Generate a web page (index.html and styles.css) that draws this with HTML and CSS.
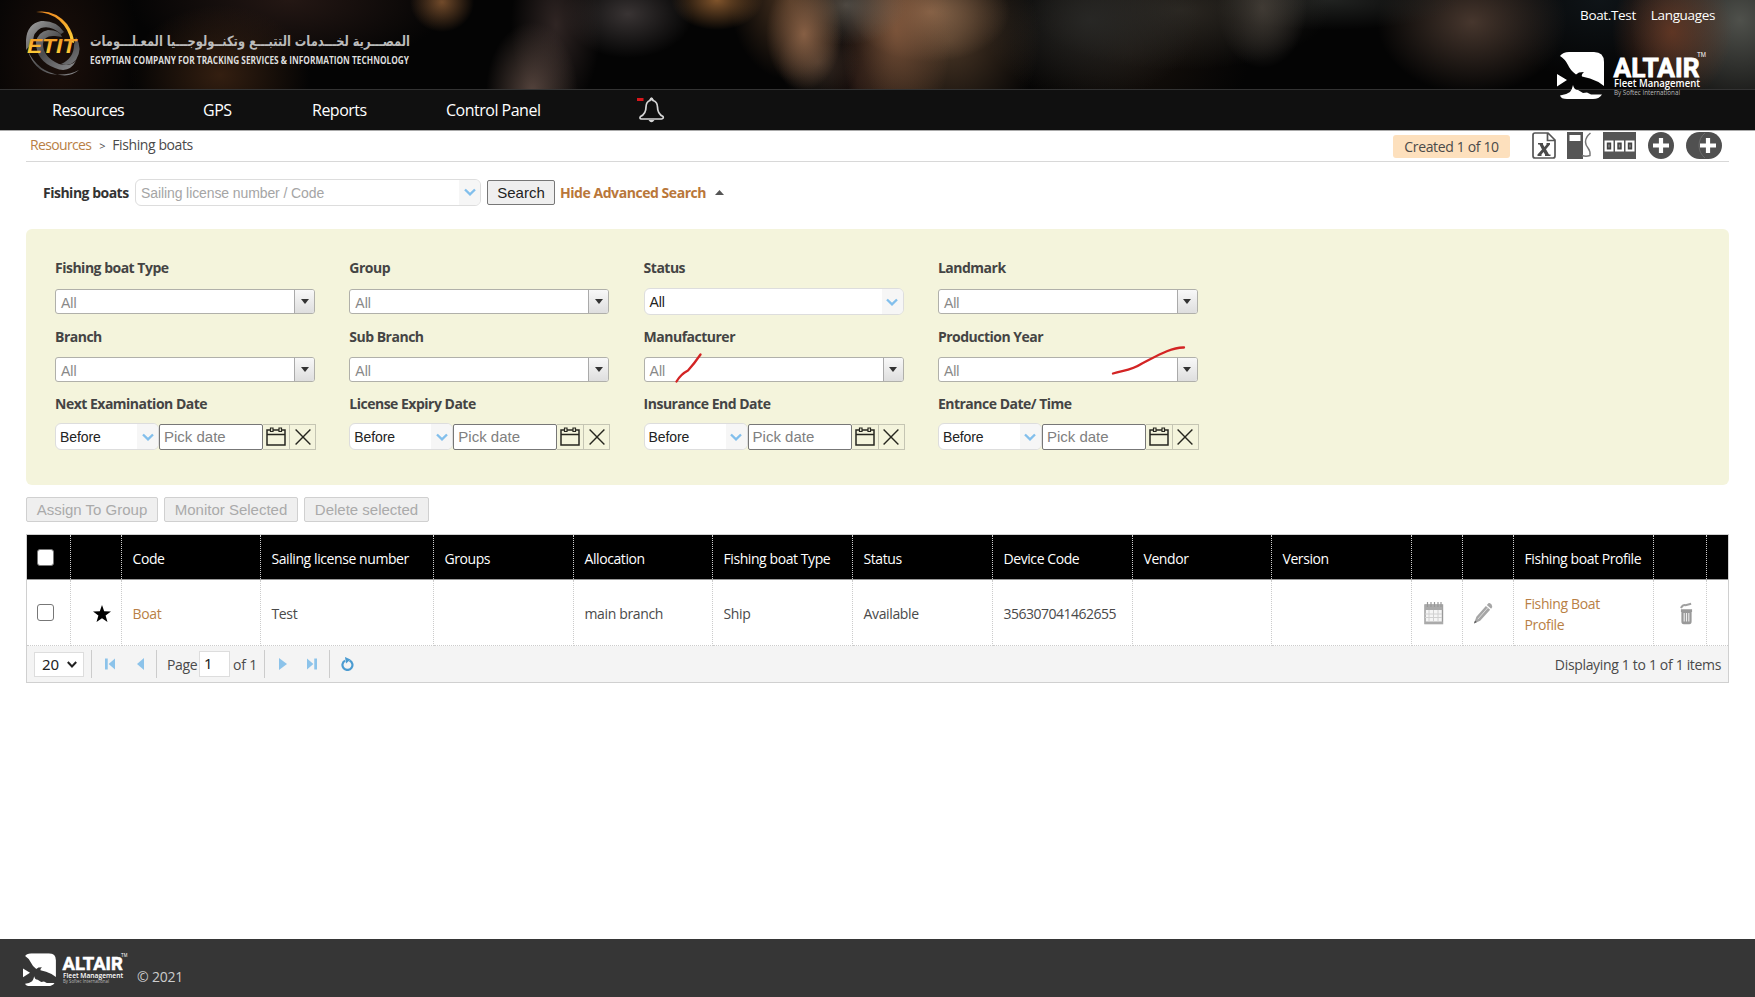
FILE: index.html
```html
<!DOCTYPE html>
<html lang="en">
<head>
<meta charset="utf-8">
<title>Fishing boats</title>
<link rel="stylesheet" href="styles.css">
</head>
<body>
<svg class="defs" width="0" height="0" aria-hidden="true">
  <symbol id="eagle" viewBox="0 0 48 48">
    <path fill="#fff" d="M3 4Q6 0 12 0H37Q47 0 47 10V34Q41 29 33 26.500L25 24.500Q24 22.500 27 20L22 20.500 19 22.500Q13 18 11 13 8 7 3 4ZM0 22L10 28 0 34.500ZM16 33Q17 38 21 38L26 41 30 40.500 34 42.500 45 42.500Q42 47 36 47H10Q4 47 3 43.500 9 43 13 40 15 38 16 33Z"/>
  </symbol>
  <symbol id="chev" viewBox="0 0 12 8"><path d="M1 1.500L6 6.300 11 1.500" fill="none" stroke="#82bfec" stroke-width="2.400"/></symbol>
  <symbol id="cal" viewBox="0 0 20 19"><path d="M1 3H19V18H1ZM1 7.500H19" fill="none" stroke="#26261f" stroke-width="1.500"/><path d="M4.500 1H7V4.500H4.500ZM13 1H15.500V4.500H13Z" fill="#f4f4dc" stroke="#26261f" stroke-width="1.200"/></symbol>
  <symbol id="cross" viewBox="0 0 16 16"><path d="M.6.600L15.400 15.400M15.400.600L.6 15.400" stroke="#26261f" stroke-width="1.400"/></symbol>
</svg>

<header class="banner">
  <svg class="etit" width="390" height="72" viewBox="0 0 390 72">
    <defs>
      <linearGradient id="gold" x1="0" y1="0" x2="0" y2="1"><stop offset="0" stop-color="#ee8d22"/><stop offset="1" stop-color="#ffd73c"/></linearGradient>
      <linearGradient id="steel" x1="0" y1="0" x2="1" y2="1"><stop offset="0" stop-color="#a5a5a5"/><stop offset=".5" stop-color="#4c4c4e"/><stop offset="1" stop-color="#8e8e90"/></linearGradient>
    </defs>
    <path fill="url(#gold)" d="M10 2Q28-1 41 14 48 24 48 33L45 32Q43 19 33 10 23 2 10 2Z"/>
    <path fill="url(#steel)" d="M0 30Q1 14 15 11 30 10 38 22L35 24Q25 15 15 18 7 22 7 32L0 40ZM10 32Q12 22 22 20 34 20 36 27L29 26Q18 25 17 34 17 47 33 54 44 57 50 51 43 64 29 58 10 51 10 32Z"/>
    <path fill="url(#steel)" d="M2 41Q8 60 25 64 42 66 53 60 45 67 34 65 12 62 2 41ZM50 27Q57 39 50 50 44 57 35 54 48 48 48 35Z"/>
    <text class="etit-name" x="1" y="43" textLength="49" lengthAdjust="spacingAndGlyphs">ETIT</text>
    <text class="etit-ar" x="224" y="36" direction="rtl" text-anchor="middle" textLength="320" lengthAdjust="spacingAndGlyphs">المصـــرية لخـــدمات التتبـــع وتكنــولوجـــيا المعـلـــومات</text>
    <text class="etit-en" x="64" y="53.500" textLength="319" lengthAdjust="spacingAndGlyphs">EGYPTIAN COMPANY FOR TRACKING SERVICES &amp; INFORMATION TECHNOLOGY</text>
  </svg>
  <div class="user-links"><a>Boat.Test</a><a>Languages</a></div>
  <svg class="altair-top" width="150" height="48" viewBox="0 0 150 48">
    <use href="#eagle" width="48" height="48"/>
    <text class="altair-name" x="56.500" y="24.500" textLength="86" lengthAdjust="spacingAndGlyphs">ALTAIR</text>
    <text class="altair-sub" x="57" y="35" textLength="86" lengthAdjust="spacingAndGlyphs">Fleet Management</text>
    <text class="altair-by" x="57" y="43" textLength="66" lengthAdjust="spacingAndGlyphs">By Softec International</text>
    <text class="altair-tm" x="140" y="5" textLength="9" lengthAdjust="spacingAndGlyphs">TM</text>
  </svg>
</header>

<nav class="menu">
  <a class="m1">Resources</a><a class="m2">GPS</a><a class="m3">Reports</a><a class="m4">Control Panel</a>
  <svg class="bell" width="30" height="28" viewBox="0 0 30 28"><path fill="#d8161b" d="M0 2H6.500V5H0Z"/><path d="M13 4.500Q14.500 1 16 4.500Q20.500 6 20.500 11Q20.500 18 26 20.500Q27 22.500 24.500 23H4.500Q2 22.500 3.500 20.500Q9 18 9 11Q9 6 13 4.500Z" fill="none" stroke="#d6d6d6" stroke-width="1.700"/><path d="M11.500 24Q14.500 28.500 17.500 24ZM12 4.500Q14.500-2 17 4.500Z" fill="#d6d6d6"/></svg>
</nav>

<main class="page">
  <div class="crumbs">
    <a class="link">Resources</a><span class="gt">&gt;</span><span class="here">Fishing boats</span>
    <div class="tools">
      <span class="badge">Created 1 of 10</span>
      <svg class="t-x" width="24" height="27" viewBox="0 0 24 27"><path d="M3 1H16L23 8V24Q23 26 21 26H3Q1 26 1 24V3Q1 1 3 1ZM15.500 1V8.500H23" fill="#fff" stroke="#555" stroke-width="1.700"/><path d="M6 11H11V12.500L12.500 15 14.500 12.500V11H18V12.500L14 17.300 17 22.500H18.500V24H13V22.500L11.500 20 9.500 22.500V24H5.500V22.500L10 17.500 7.500 12.500H6Z" fill="#4a4a4a"/></svg>
      <svg class="t-f" width="25" height="27" viewBox="0 0 25 27"><path fill="#555" fill-rule="evenodd" d="M0 0H16V27H0ZM2.500 3V9H13.500V3Z"/><path d="M23.500 1Q18.500 5 18.500 10 18.500 13 21 16 23.500 19 23 23.500 19 25 15 23.500" fill="none" stroke="#777" stroke-width="1.500"/></svg>
      <svg class="t-c" width="33" height="27" viewBox="0 0 33 27"><path fill="#555" d="M0 0H33V27H0Z"/><path fill="#fff" d="M1.500 8.500H10.500V19.500H1.500ZM12 8.500H21V19.500H12ZM22.500 8.500H31.500V19.500H22.500Z"/><path d="M6 10.500V17.500M16.500 10.500V17.500M27 10.500V17.500" stroke="#444" stroke-width="4.400"/><path d="M6 12.500V15.500M16.500 12.500V15.500M27 12.500V15.500" stroke="#888" stroke-width="1.400"/></svg>
      <svg class="t-p" width="26" height="27" viewBox="0 0 26 27"><ellipse cx="13" cy="13.500" rx="13" ry="13.500" fill="#505050"/><path d="M13 6V21M5 13.500H21" stroke="#fff" stroke-width="4.200"/></svg>
      <svg class="t-pp" width="36" height="27" viewBox="0 0 36 27"><rect width="36" height="27" rx="13.500" fill="#505050"/><path d="M19 1Q13 6 13 13.500 13 21 19 26" fill="none" stroke="#6b6b6b"/><path d="M22 6V21M14 13.500H30" stroke="#fff" stroke-width="4.200"/></svg>
    </div>
  </div>

  <div class="search">
    <b>Fishing boats</b>
    <div class="sel sel-main"><span class="ph">Sailing license number / Code</span><i><svg width="12" height="8"><use href="#chev"/></svg></i></div>
    <button class="btn btn-search">Search</button>
    <a class="adv">Hide Advanced Search</a>
    <svg class="up" width="9" height="5" viewBox="0 0 9 5"><path d="M0 5L4.500 0 9 5Z" fill="#555"/></svg>
  </div>

  <section class="filters">
    <div class="cell"><b>Fishing boat Type</b><div class="combo"><span>All</span><i></i></div></div>
    <div class="cell"><b>Group</b><div class="combo"><span>All</span><i></i></div></div>
    <div class="cell"><b>Status</b><div class="sel"><span>All</span><i><svg width="12" height="8"><use href="#chev"/></svg></i></div></div>
    <div class="cell"><b>Landmark</b><div class="combo"><span>All</span><i></i></div></div>

    <div class="cell"><b>Branch</b><div class="combo"><span>All</span><i></i></div></div>
    <div class="cell"><b>Sub Branch</b><div class="combo"><span>All</span><i></i></div></div>
    <div class="cell"><b>Manufacturer</b><div class="combo"><span>All</span><i></i></div></div>
    <div class="cell"><b>Production Year</b><div class="combo"><span>All</span><i></i></div></div>

    <div class="cell"><b>Next Examination Date</b><div class="date"><div class="sel"><span>Before</span><i><svg width="12" height="8"><use href="#chev"/></svg></i></div><div class="pick">Pick date</div><div class="ib"><svg width="20" height="19"><use href="#cal"/></svg></div><div class="ib ib-x"><svg width="16" height="16"><use href="#cross"/></svg></div></div></div>
    <div class="cell"><b>License Expiry Date</b><div class="date"><div class="sel"><span>Before</span><i><svg width="12" height="8"><use href="#chev"/></svg></i></div><div class="pick">Pick date</div><div class="ib"><svg width="20" height="19"><use href="#cal"/></svg></div><div class="ib ib-x"><svg width="16" height="16"><use href="#cross"/></svg></div></div></div>
    <div class="cell"><b>Insurance End Date</b><div class="date"><div class="sel"><span>Before</span><i><svg width="12" height="8"><use href="#chev"/></svg></i></div><div class="pick">Pick date</div><div class="ib"><svg width="20" height="19"><use href="#cal"/></svg></div><div class="ib ib-x"><svg width="16" height="16"><use href="#cross"/></svg></div></div></div>
    <div class="cell"><b>Entrance Date/ Time</b><div class="date"><div class="sel"><span>Before</span><i><svg width="12" height="8"><use href="#chev"/></svg></i></div><div class="pick">Pick date</div><div class="ib"><svg width="20" height="19"><use href="#cal"/></svg></div><div class="ib ib-x"><svg width="16" height="16"><use href="#cross"/></svg></div></div></div>

    <svg class="marks" width="520" height="44" viewBox="0 0 520 44"><path d="M6.500 36.500Q11 29 18 25.500 24 19 30.500 9.500M443 28.500C455 25 462 25 472 18.500C485 12 501 2 514 2.500" fill="none" stroke="#d32424" stroke-width="2.300" stroke-linecap="round"/></svg>
  </section>

  <div class="actions"><button class="btn off b1">Assign To Group</button><button class="btn off b2">Monitor Selected</button><button class="btn off b3">Delete selected</button></div>

  <div class="grid">
    <div class="row head">
      <div class="chk"><i></i></div><div></div><div>Code</div><div>Sailing license number</div><div>Groups</div><div>Allocation</div><div>Fishing boat Type</div><div>Status</div><div>Device Code</div><div>Vendor</div><div>Version</div><div></div><div></div><div>Fishing boat Profile</div><div></div><div></div>
    </div>
    <div class="row body">
      <div class="chk"><i></i></div>
      <div class="star"><svg width="18" height="17" viewBox="0 0 18 17"><path d="M9 0L11.200 6.300 18 6.500 12.600 10.500 14.500 17 9 13.200 3.500 17 5.400 10.500 0 6.500 6.800 6.300Z"/></svg></div>
      <div><a class="link">Boat</a></div><div>Test</div><div></div><div>main branch</div><div>Ship</div><div>Available</div><div class="num">356307041462655</div><div></div><div></div>
      <div class="ic"><svg width="20" height="23" viewBox="0 0 20 23"><path fill="#f5f5f5" stroke="#999" stroke-width="1.400" d="M1 3H18.500V21.500H1Z"/><path fill="#aaa" d="M1 3H18.500V8H1ZM1 19.500H19V22H1Z"/><path d="M3.500 0V5M7 0V5M10.500 0V5M14 0V5M17 0V5" stroke="#999" stroke-width="1.200"/><path d="M1 12H18M1 15.500H18M5 8V20M9.500 8V20M14 8V20" stroke="#d0d0d0"/></svg></div>
      <div><svg width="19" height="23" viewBox="0 0 20 23"><path fill="#a6a6a6" d="M0 22L2.500 15 12.500 3.500 17 7.500 6.500 19ZM13.500 2.500L15.500.500Q17 0 18.500 2 20 4 18 6.500Z"/><path d="M4 17.500L14.500 5.500" stroke="#ddd"/><path d="M0 22L1 19 3 20.500Z" fill="#555"/></svg></div>
      <div><a class="link">Fishing Boat<br>Profile</a></div>
      <div class="bin"><svg width="13" height="23" viewBox="0 0 14 23"><path d="M1 5.500Q3 2 6 2.500L12 1" fill="none" stroke="#a0a0a0" stroke-width="2.200"/><path fill="#999" d="M1 7H13V10H12.500V20Q12.500 23 10 23H4Q1.500 23 1.500 20V10H1Z"/><path d="M4.500 11V20M7 11V20M9.500 11V20" stroke="#eee" stroke-width="1.200"/></svg></div>
      <div></div>
    </div>
    <div class="pager">
      <div class="size">20<svg width="10" height="7" viewBox="0 0 10 7"><path d="M.8 1L5 5.500 9.200 1" fill="none" stroke="#222" stroke-width="2"/></svg></div>
      <i class="sep s1"></i>
      <svg class="p1" width="10" height="12" viewBox="0 0 11 12"><path fill="#8cc3ea" d="M0 0H3V12H0ZM11 0V12L4 6Z"/></svg>
      <svg class="p2" width="7" height="12" viewBox="0 0 7 12"><path fill="#8cc3ea" d="M7 0V12L0 6Z"/></svg>
      <i class="sep s2"></i>
      <span class="pg">Page</span><span class="inp">1</span><span class="of">of 1</span>
      <i class="sep s3"></i>
      <svg class="p3" width="8" height="12" viewBox="0 0 8 12"><path fill="#8cc3ea" d="M0 0V12L8 6Z"/></svg>
      <svg class="p4" width="10" height="12" viewBox="0 0 11 12"><path fill="#8cc3ea" d="M11 0H8V12H11ZM0 0V12L7 6Z"/></svg>
      <i class="sep s4"></i>
      <svg class="p5" width="13" height="14" viewBox="0 0 13 14"><path d="M8.500 3.400A5 5 0 1 1 4 3.600" fill="none" stroke="#4a9bd1" stroke-width="2.200"/><path fill="#4a9bd1" d="M4 0L9.500 2.500 5 6.500Z"/></svg>
      <span class="disp">Displaying 1 to 1 of 1 items</span>
    </div>
  </div>
</main>

<footer class="foot">
  <svg width="105" height="34" viewBox="0 0 150 48">
    <use href="#eagle" width="48" height="48"/>
    <text class="altair-name" x="56.500" y="24.500" textLength="86" lengthAdjust="spacingAndGlyphs">ALTAIR</text>
    <text class="altair-sub" x="57" y="35" textLength="86" lengthAdjust="spacingAndGlyphs">Fleet Management</text>
    <text class="altair-by" x="57" y="43" textLength="66" lengthAdjust="spacingAndGlyphs">By Softec International</text>
    <text class="altair-tm" x="140" y="5" textLength="9" lengthAdjust="spacingAndGlyphs">TM</text>
  </svg>
  <span>© 2021</span>
</footer>
</body>
</html>
```
FILE: styles.css
```css
* { box-sizing: border-box; }
body { margin: 0; width: 1755px; height: 997px; overflow: hidden; display: flex; flex-direction: column; background: #fff; font: 14px/20px "Open Sans", "Noto Sans", sans-serif; color: #4a4a4a; letter-spacing: -0.35px; }
svg { display: block; flex: none; }
i { font-style: normal; display: block; flex: none; }
.defs { position: absolute; }

.banner { position: relative; height: 90px; flex: none; border-bottom: 1px solid #333;
  background:
    radial-gradient(ellipse 32px 30px at 442px 2px, rgba(150,98,55,.75), transparent),
    radial-gradient(ellipse 90px 70px at 220px 75px, rgba(72,42,22,.7), transparent),
    radial-gradient(ellipse 160px 70px at 290px 0, rgba(44,28,24,.8), transparent),
    radial-gradient(ellipse 80px 140px at 60px 60px, rgba(42,22,14,.6), transparent),
    radial-gradient(ellipse 46px 70px at 532px 92px, rgba(98,78,70,.85), transparent),
    radial-gradient(ellipse 45px 90px at 556px 25px, rgba(62,48,46,.75), transparent),
    radial-gradient(ellipse 65px 44px at 628px 14px, rgba(66,60,60,.85), transparent),
    radial-gradient(ellipse 46px 30px at 717px 0, rgba(150,98,50,.85), transparent),
    radial-gradient(ellipse 38px 56px at 804px 34px, rgba(150,106,76,.85), transparent),
    radial-gradient(ellipse 60px 80px at 790px 0, rgba(96,66,42,.75), transparent),
    radial-gradient(ellipse 40px 40px at 818px 62px, rgba(90,70,56,.6), transparent),
    radial-gradient(ellipse 60px 40px at 846px 5px, rgba(105,100,92,.7), transparent),
    radial-gradient(ellipse 55px 120px at 896px 30px, rgba(134,90,62,.8), transparent),
    radial-gradient(ellipse 80px 50px at 930px 12px, rgba(150,112,82,.85), transparent),
    radial-gradient(ellipse 90px 100px at 950px 40px, rgba(90,66,46,.8), transparent),
    radial-gradient(ellipse 40px 80px at 858px 80px, rgba(40,24,20,.7), transparent),
    radial-gradient(ellipse 110px 80px at 1090px 20px, rgba(42,42,40,.85), transparent),
    radial-gradient(ellipse 150px 60px at 1180px 10px, rgba(48,44,38,.85), transparent),
    radial-gradient(ellipse 120px 100px at 1130px 50px, rgba(28,20,14,.8), transparent),
    radial-gradient(ellipse 45px 60px at 1262px 8px, rgba(88,80,72,.8), transparent),
    radial-gradient(ellipse 130px 30px at 1330px 0, rgba(40,42,40,.8), transparent),
    radial-gradient(ellipse 95px 72px at 1472px 22px, rgba(78,60,50,.9), transparent),
    radial-gradient(ellipse 60px 70px at 1672px 32px, rgba(110,58,36,.8), transparent),
    radial-gradient(ellipse 110px 110px at 1740px 20px, rgba(92,94,88,.85), transparent),
    radial-gradient(ellipse 120px 80px at 1600px 0, rgba(16,22,26,.9), transparent),
    #040404; }
.etit { position: absolute; left: 26px; top: 10px; }
.etit-name { font: italic bold 21px "Liberation Sans", sans-serif; fill: url(#gold); letter-spacing: 0; }
.etit-ar { font: bold 14px "DejaVu Sans", sans-serif; fill: #bbb; letter-spacing: 0; }
.etit-en { font: bold 11px "Open Sans", sans-serif; fill: #ddd; letter-spacing: 0; }
.altair-name { font: bold 26px "Roboto", sans-serif; fill: #fff; stroke: #fff; stroke-width: .8px; letter-spacing: 0; }
.altair-sub { font: 600 10px "Open Sans", sans-serif; fill: #fff; letter-spacing: 0; }
.altair-by { font: 6.500px "Open Sans", sans-serif; fill: #bbb; letter-spacing: 0; }
.altair-tm { font: 6.500px "Liberation Sans", sans-serif; fill: #fff; letter-spacing: 0; }
.user-links { position: absolute; right: 40px; top: 5px; display: flex; gap: 15px; color: #fff; font-size: 13.500px; }
.altair-top { position: absolute; left: 1557px; top: 52px; z-index: 2; overflow: visible; }

.menu { height: 41px; flex: none; background: #101010; border-bottom: 1px solid #aaa; display: flex; align-items: center; padding-left: 52px; color: #fff; font-size: 16px; letter-spacing: -0.500px; }
.m1 { width: 151px; } .m2 { width: 109px; } .m3 { width: 134px; } .m4 { width: 191px; }
.bell { margin-bottom: 1px; }

.page { flex: 1; padding: 0 26px; display: flex; flex-direction: column; }
.link { color: #b97f45; }
.crumbs { height: 31px; flex: none; border-bottom: 1px solid #d8d8d8; padding: 0 7px 3px 4px; display: flex; align-items: center; }
.crumbs > .link { letter-spacing: -0.650px; }
.here { letter-spacing: -0.400px; }
.gt { font-size: 11px; margin: 2px 7px 0 8px; }
.tools { margin-left: auto; display: flex; align-items: center; height: 28px; padding-top: 2px; }
.badge { width: 117px; height: 23px; margin-top: 1px; margin-right: 22px; border-radius: 3px; background: #fde0bd; text-align: center; line-height: 24px; }
.t-f { margin-left: 11px; } .t-c { margin-left: 11px; } .t-p { margin-left: 12px; } .t-pp { margin-left: 12px; }

.search { height: 67px; flex: none; padding: 17px 0 23px 17px; display: flex; align-items: center; }
.search b { width: 92px; color: #333; }
b { font-weight: 700; letter-spacing: -0.500px; white-space: nowrap; }
.sel { height: 27px; border: 1px solid #ddd; border-radius: 6px; background: #fff; display: flex; font: 14px/26px "Liberation Sans", Arial, sans-serif; letter-spacing: -0.1px; color: #222; padding-left: 5px; overflow: hidden; }
.sel span { flex: 1; }
.sel i { width: 21px; background: #f6f6f6; display: flex; align-items: center; justify-content: center; }
.sel .ph { color: #a5a5a5; line-height: 27px; }
.sel-main { width: 346px; margin-top: -1px; }
.btn { font: 15px/21px "Liberation Sans", Arial, sans-serif; letter-spacing: 0; padding: 0; height: 25px; border: 1px solid #777; border-radius: 2px; background: #efefef; color: #222; white-space: nowrap; }
.btn-search { width: 68px; margin: -1px 5px 0 6px; }
.adv { font-weight: 700; color: #b9773a; letter-spacing: -0.450px; width: 155px; white-space: nowrap; }
.up { margin-top: -1px; }

.filters { position: relative; height: 256px; flex: none; background: #f4f4dc; border-radius: 6px; padding: 29px 0 0 29px; display: grid; grid-template-columns: repeat(4, 294.300px); grid-template-rows: 69px 67px 62px; }
.cell b { display: block; color: #444; }
.cell { width: 260px; }
.cell .combo, .cell > .sel { margin-top: 10px; }
.combo { height: 25px; border: 1px solid #b0b0aa; border-radius: 3px; background: #fff; display: flex; font: 14px/26px "Liberation Sans", Arial, sans-serif; letter-spacing: 0; color: #888; padding-left: 5px; overflow: hidden; }
.cell .combo { margin-top: 11px; }
.cell:nth-child(n+5) .combo { margin-top: 10px; }
.combo span { flex: 1; }
.combo i { width: 20px; border-left: 1px solid #aaa; background: linear-gradient(#f8f8f8, #dedede); display: flex; justify-content: center; padding-top: 9px; }
.combo i::before { content: ""; width: 0; height: 0; border: 4px solid transparent; border-top: 5px solid #333; border-bottom: 0; }
.date { margin-top: 9px; display: flex; align-items: center; width: 261px; }
.date .sel { width: 104px; padding-left: 4px; }
.pick { width: 104px; height: 26px; border: 1px solid #777; border-radius: 2px; background: #fff; font: 15px/23px "Liberation Sans", Arial, sans-serif; letter-spacing: 0; color: #808080; padding-left: 4px; }
.ib { width: 26px; height: 26px; border: 1px solid #c5c5b3; border-width: 1px 0; display: flex; align-items: center; justify-content: center; }
.ib-x { width: 27px; border-width: 1px; }
.marks { position: absolute; left: 644px; top: 116px; }

.actions { height: 49px; flex: none; padding-top: 12px; display: flex; gap: 6px; }
.off { background: #efefef; border-color: #d0d0d0; color: #aaa; }
.b1 { width: 132px; } .b2 { width: 134px; } .b3 { width: 125px; }

.grid { height: 149px; flex: none; border: 1px solid #d0d0d0; }
.row { display: grid; grid-template-columns: 44px 51px 139px 173px 140px 139px 140px 140px 140px 139px 140px 51px 51px 140px 53px 1fr; }
.row > div { padding-left: 10.500px; display: flex; align-items: center; border-right: 1px dotted #ccc; white-space: nowrap; line-height: 21px; }
.row > div:last-child { border-right: 0; }
.row .chk { padding-left: 10px; }
.chk i { width: 17px; height: 17px; border: 1px solid #777; border-radius: 3px; background: #fff; }
.head { height: 45px; background: #000; color: #fff; letter-spacing: -0.420px; border-bottom: 1px solid #999; }
.head > div { padding-top: 2px; }
.head .chk i { margin-top: -2px; }
.body { height: 66px; }
.body > div { border-bottom: 1px dotted #ccc; padding-top: 2px; }
.row .star { padding-left: 22px; }
.row .ic { padding-left: 12px; }
.row .bin { padding-left: 26px; }
.body .chk { padding-top: 0; }
.num { letter-spacing: -0.500px; }

.pager { height: 36px; background: #f4f4f4; display: flex; align-items: center; padding: 0 7px 0 7px; }
.size { width: 50px; height: 25px; border: 1px solid #ddd; background: #fff; color: #222; font: 15px/23px "Noto Sans", sans-serif; padding-left: 7px; display: flex; align-items: center; gap: 8px; letter-spacing: 0; }
.sep { width: 1px; height: 28px; background: #ccc; }
.s1 { margin: 0 13px 0 7px; } .p2 { margin-left: 22px; } .s2 { margin: 0 10px 0 12px; }
.pg { width: 32px; }
.inp { width: 31px; height: 26px; border: 1px solid #ddd; background: #fff; color: #222; padding-left: 4px; font: 15px/22px "Noto Sans", sans-serif; }
.of { width: 34px; padding-left: 3px; letter-spacing: -0.2px; } .s3 { margin-right: 14px; } .p4 { margin-left: 20px; } .s4 { margin: 0 11px 0 12px; }
.pg, .of, .disp { padding-top: 1px; }
.disp { margin-left: auto; letter-spacing: -0.330px; }

.foot { height: 58px; flex: none; background: #363636; padding: 14px 0 0 23px; display: flex; gap: 9px; color: #ccc; }
.foot svg { overflow: visible; }
.foot span { margin-top: 14px; letter-spacing: -0.2px; }
```
